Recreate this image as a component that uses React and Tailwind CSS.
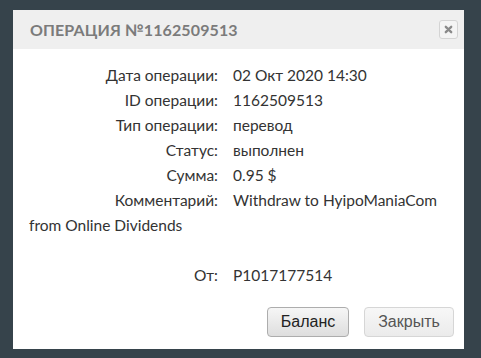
import React from 'react'

const rows = [
  ['Дата операции:', '02 Окт 2020 14:30'],
  ['ID операции:', '1162509513'],
  ['Тип операции:', 'перевод'],
  ['Статус:', 'выполнен'],
  ['Сумма:', '0.95 $'],
]

const Row = ({ label, children }) => (
  <div className='leading-[25px]'>
    <span className='inline-block w-[189px] text-right mr-[15px]'>{label}</span>
    {children}
  </div>
)

const App = () => {
  return (
    <div className='w-[481px] h-[358px] bg-[#36434b] pt-[10px] pl-[13px] overflow-hidden'>
      <div className='w-[451px] h-[339px] bg-white flex flex-col rounded-tr-[3px]'>

        {/* header */}
        <div className='h-[39px] bg-[#efefef] flex items-center justify-between pl-[17px] pr-[6px]'>
          <span className='text-[16px] font-bold tracking-[0.1px] text-[#7b7b7b]' style={{ fontFamily: 'Lato, "Open Sans", sans-serif' }}>
            ОПЕРАЦИЯ №1162509513
          </span>
          <button className='w-[19px] h-[19px] border border-[#d4d4d4] rounded-[3px] bg-[#f4f4f4] flex items-center justify-center'>
            <svg width='9' height='9' viewBox='0 0 10 10'>
              <path d='M2 2 L8 8 M8 2 L2 8' stroke='#8a8a8a' strokeWidth='2.6' strokeLinecap='round' />
            </svg>
          </button>
        </div>

        {/* body */}
        <div className='flex-1 pt-[14px] pl-[16px] pr-[10px] text-[15.5px] text-[#333]' style={{ fontFamily: 'Lato, "Open Sans", sans-serif' }}>
          {rows.map(([l, v]) => (
            <Row key={l} label={l}>{v}</Row>
          ))}
          <Row label='Комментарий:'>
            Withdraw to HyipoManiaCom
            <br />
            from Online Dividends
          </Row>
          <div className='h-[25px]'></div>
          <Row label='От:'>P1017177514</Row>

          <div className='flex justify-end gap-[15px] mt-[19px]' style={{ fontFamily: '"Liberation Sans", Arial, sans-serif' }}>
            <button className='w-[82px] h-[30px] rounded-[4px] border border-[#adadad] bg-gradient-to-b from-[#f6f6f6] to-[#dedede] text-[16px] text-[#222]'>
              Баланс
            </button>
            <button className='w-[90px] h-[30px] rounded-[4px] border border-[#d6d6d6] bg-gradient-to-b from-[#f7f7f7] to-[#ebebeb] text-[16px] text-[#555]'>
              Закрыть
            </button>
          </div>
        </div>

      </div>
    </div>
  )
}

export default App
